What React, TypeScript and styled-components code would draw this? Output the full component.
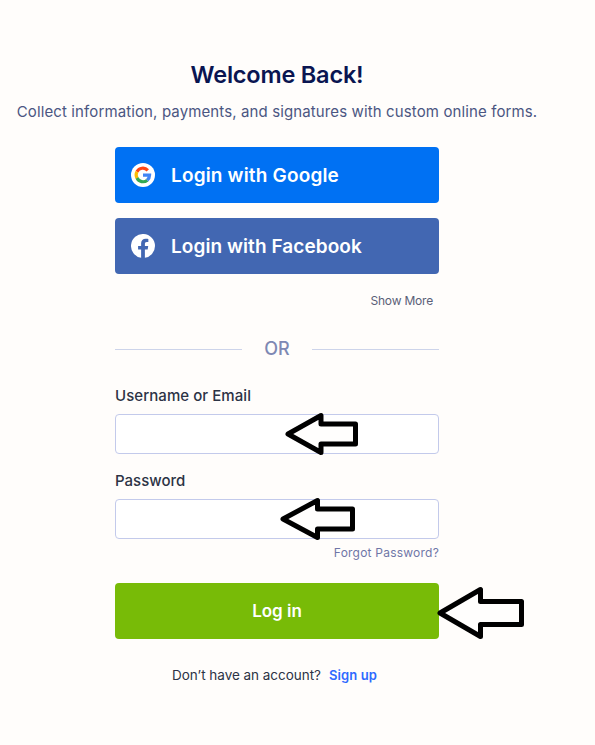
import React from "react";
import styled, { createGlobalStyle } from "styled-components";

const GlobalStyle = createGlobalStyle`
  * { box-sizing: border-box; }
  body { margin: 0; background: #fffdfb; font-family: Inter, "Open Sans", sans-serif; }
  button, input { font-family: inherit; }
`;

const Page = styled.main`
  width: 554px;
  height: 745px;
  padding-top: 60px;
  display: flex;
  flex-direction: column;
  align-items: center;
`;

const Title = styled.h1`
  margin: 0;
  font-size: 23.5px;
  line-height: 30px;
  font-weight: 600;
  letter-spacing: -0.2px;
  color: #0a1551;
  white-space: nowrap;
`;

const Subtitle = styled.p`
  margin: 11px 0 0;
  font-size: 15px;
  line-height: 22px;
  letter-spacing: 0.12px;
  color: #4b5682;
  white-space: nowrap;
`;

const Panel = styled.section`
  width: 324px;
  margin-top: 24px;
  display: flex;
  flex-direction: column;
`;

const SocialButton = styled.button<{ $color: string; $spacing: number }>`
  height: 56px;
  border: 0;
  border-radius: 4px;
  padding: 0 16px;
  margin-bottom: 15px;
  display: flex;
  align-items: center;
  gap: 16px;
  background: ${(p) => p.$color};
  color: #fff;
  font-size: 19px;
  font-weight: 600;
  letter-spacing: ${(p) => p.$spacing}px;
  text-align: left;
`;

const ShowMore = styled.a`
  align-self: flex-end;
  margin: 4px 6px 0 0;
  font-size: 12px;
  line-height: 16px;
  letter-spacing: -0.2px;
  color: #5a6078;
`;

const Divider = styled.div`
  margin-top: 28px;
  height: 24px;
  display: flex;
  align-items: center;
  color: #7e88b3;
  font-size: 18px;
  line-height: 22px;
  font-weight: 500;

  &::before, &::after {
    content: "";
    width: 127px;
    height: 1px;
    background: #cdd4ea;
  }
`;

const DividerText = styled.span`
  flex: 1;
  text-align: center;
`;

const Label = styled.label<{ $top: number; $spacing: number }>`
  margin-top: ${(p) => p.$top}px;
  font-size: 15px;
  line-height: 20px;
  font-weight: 500;
  letter-spacing: ${(p) => p.$spacing}px;
  color: #2c3345;
`;

const Field = styled.div`
  position: relative;
  height: 40px;
  margin-top: 8px;
`;

const Input = styled.input`
  display: block;
  width: 100%;
  height: 40px;
  border: 1px solid #c3caeb;
  border-radius: 4px;
  background: #fff;
  padding: 0 12px;
  outline: none;
`;

const Forgot = styled.a`
  align-self: flex-end;
  margin-top: 5px;
  font-size: 12px;
  line-height: 18px;
  letter-spacing: 0.22px;
  color: #6f76a7;
`;

const Submit = styled.div`
  position: relative;
  margin-top: 21px;
`;

const LoginButton = styled.button`
  width: 100%;
  height: 56px;
  border: 0;
  border-radius: 4px;
  background: #78bb07;
  color: #fff;
  font-size: 17px;
  font-weight: 600;
`;

const Footer = styled.p`
  margin: 26px 5px 0 0;
  align-self: center;
  display: flex;
  gap: 8px;
  font-size: 13.5px;
  line-height: 20px;
  letter-spacing: -0.03px;
  color: #2c3345;
  white-space: nowrap;
`;

const SignUp = styled.a`
  color: #2e69ff;
  font-weight: 600;
  font-size: 13px;
  letter-spacing: 0.1px;
`;

const Pointer = styled.svg<{ $left: number; $top: number }>`
  position: absolute;
  left: ${(p) => p.$left}px;
  top: ${(p) => p.$top}px;
  fill: #fffefd;
  stroke: #000;
  stroke-width: 5;
  stroke-linejoin: round;
  pointer-events: none;
`;

const GoogleIcon = () => (
  <svg width="24" height="24" viewBox="0 0 24 24">
    <circle cx="12" cy="12" r="12" fill="#fff" />
    <g fill="none" strokeWidth="3.2">
      <path stroke="#ff4514" d="M5.9 8.8A6.7 6.7 0 0 1 16.8 7.4" />
      <path stroke="#fbbc05" d="M6.1 15.2A6.7 6.7 0 0 1 5.9 8.8" />
      <path stroke="#34a853" d="M16.3 17.2A6.7 6.7 0 0 1 6 15" />
      <path stroke="#4285f4" d="M12 12.1H18.6A6.7 6.7 0 0 1 16.2 17.2" />
    </g>
  </svg>
);

const FacebookIcon = () => (
  <svg width="24" height="24" viewBox="0 0 24 24">
    <path fill="#fff" d="M24 12a12 12 0 1 0-13.88 11.85v-8.38H7.08V12h3.04V9.36c0-3.01 1.8-4.67 4.54-4.67 1.31 0 2.68.23 2.68.23v2.96h-1.5c-1.5 0-1.96.93-1.96 1.87V12h3.33l-.53 3.47h-2.8v8.38A12 12 0 0 0 24 12z" />
  </svg>
);

export default function App() {
  return (
    <>
      <GlobalStyle />
      <Page>
        <Title>Welcome Back!</Title>
        <Subtitle>Collect information, payments, and signatures with custom online forms.</Subtitle>
        <Panel>
          <SocialButton $color="#0071f3" $spacing={0.17}>
            <GoogleIcon />
            <span>Login with Google</span>
          </SocialButton>
          <SocialButton $color="#4267b2" $spacing={0.07}>
            <FacebookIcon />
            <span>Login with Facebook</span>
          </SocialButton>
          <ShowMore>Show More</ShowMore>
          <Divider>
            <DividerText>OR</DividerText>
          </Divider>
          <Label htmlFor="username" $top={25} $spacing={0.06}>Username or Email</Label>
          <Field>
            <Input id="username" type="text" />
            <Pointer $left={169} $top={-3} width="78" height="46" viewBox="0 0 78 46">
              <path d="M4 23 L37 4.5 V13 H71.5 V33 H37 V41.5 Z" />
            </Pointer>
          </Field>
          <Label htmlFor="password" $top={17} $spacing={0}>Password</Label>
          <Field>
            <Input id="password" type="password" />
            <Pointer $left={164} $top={-3} width="78" height="46" viewBox="0 0 78 46">
              <path d="M4 23 L38.5 4.5 V13 H73.5 V33 H38.5 V41.5 Z" />
            </Pointer>
          </Field>
          <Forgot>Forgot Password?</Forgot>
          <Submit>
            <LoginButton>Log in</LoginButton>
            <Pointer $left={320} $top={2} width="94" height="56" viewBox="0 0 94 56">
              <path d="M5 28 L45.5 4.5 V16.5 H86.5 V39.5 H45.5 V51.5 Z" />
            </Pointer>
          </Submit>
          <Footer>
            <span>Don’t have an account?</span>
            <SignUp>Sign up</SignUp>
          </Footer>
        </Panel>
      </Page>
    </>
  );
}
